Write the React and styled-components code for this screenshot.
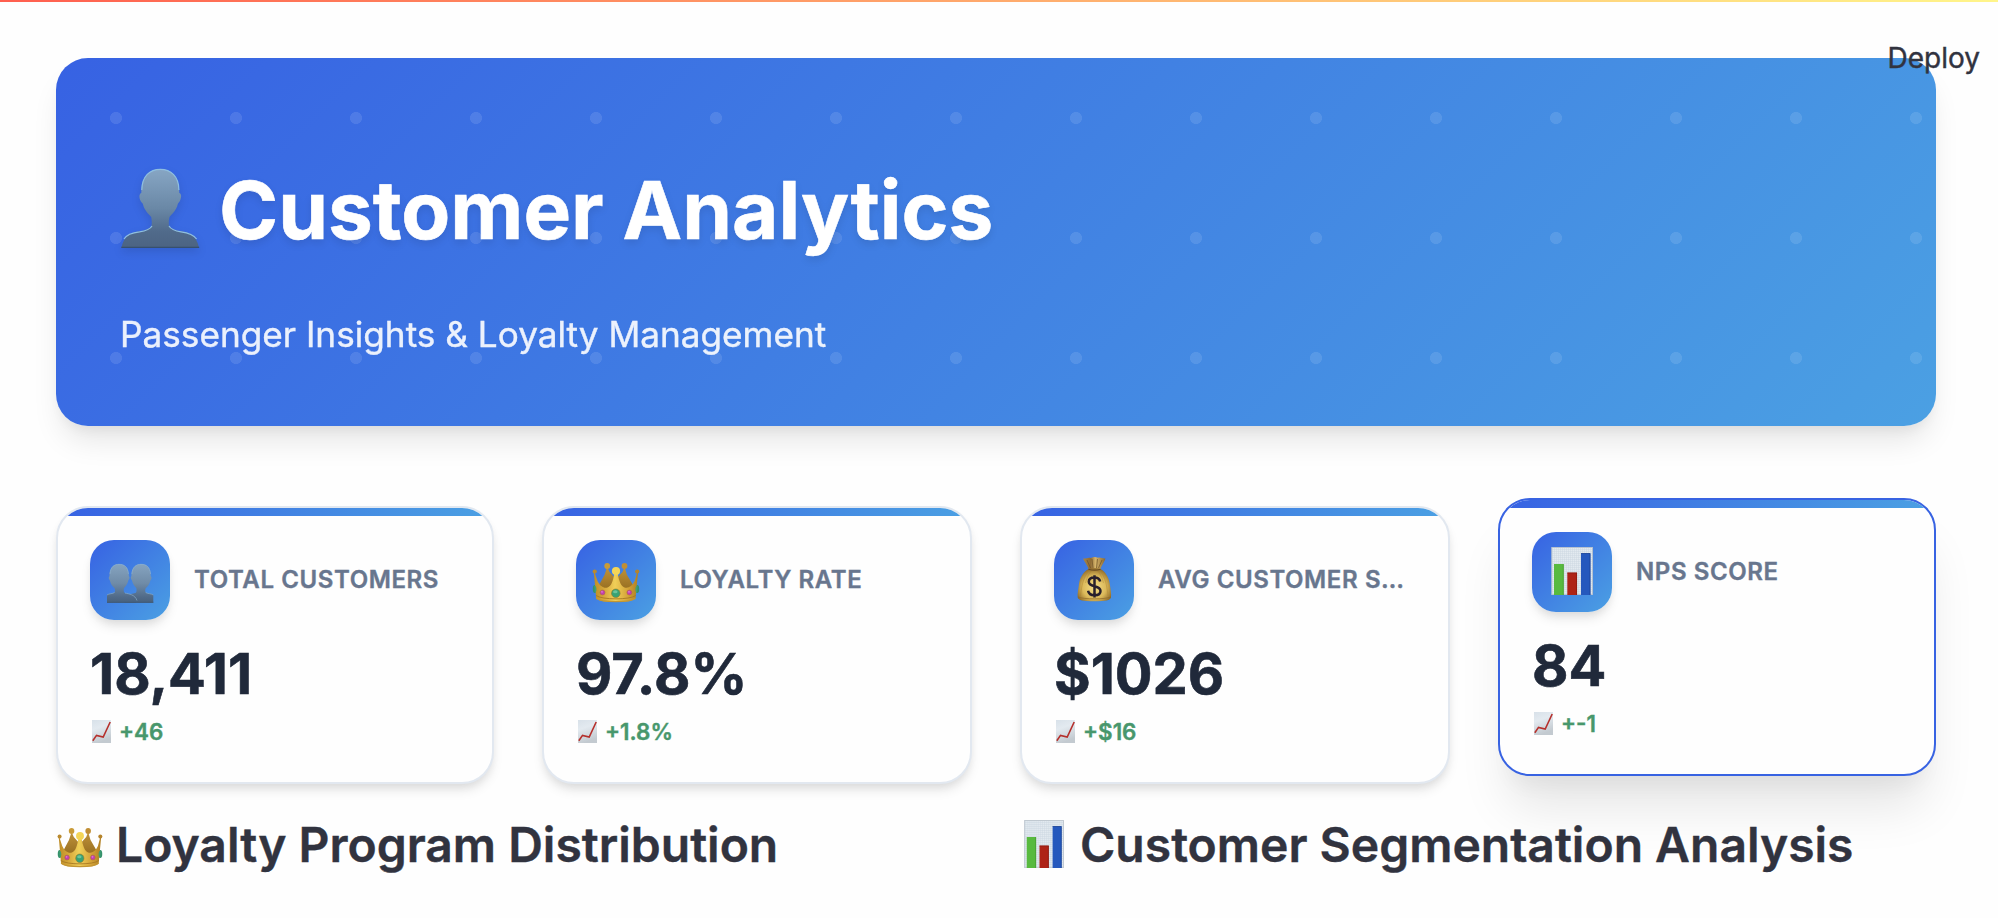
import React, { useId } from "react";
import styled, { createGlobalStyle } from "styled-components";

const GlobalStyle = createGlobalStyle`
  * { box-sizing: border-box; }
  html, body { margin: 0; height: 100%; overflow: hidden; background: #fefefe; }
  body {
    font-family: Inter, "Liberation Sans", sans-serif;
    color: #31333f;
    -webkit-text-stroke: 0.4px currentColor;
  }
`;

const brandGradient = "#3762e3 0%, #4ba0e3 100%";

const TopStripe = styled.div`
  position: absolute;
  inset: 0 0 auto 0;
  height: 2px;
  background: linear-gradient(90deg, #ff5f4f, #fff58a);
`;

const DeployButton = styled.button`
  position: absolute;
  top: 41px;
  right: 18px;
  padding: 0;
  border: 0;
  background: none;
  font: 400 28px/34px Inter, "Liberation Sans", sans-serif;
  color: #31333f;
`;

const Page = styled.main`
  width: 1998px;
  height: 918px;
  padding: 58px 62px 0 56px;
`;

const Hero = styled.header`
  height: 368px;
  padding: 104px 64px 63px;
  border-radius: 32px;
  background:
    radial-gradient(circle, rgba(255, 255, 255, 0.1) 5.7px, transparent 6.3px) 0 0 / 120px 120px,
    linear-gradient(135deg, ${brandGradient});
  box-shadow: 0 20px 30px -6px rgba(0, 0, 0, 0.1), 0 8px 12px -4px rgba(0, 0, 0, 0.05);
`;

const HeroTitle = styled.h1`
  display: flex;
  gap: 19px;
  margin: 0 0 48px;
  font-size: 80px;
  font-weight: 700;
  line-height: 96px;
  color: #fff;
  -webkit-text-stroke-width: 0.6px;
  text-shadow: 0 4px 8px rgba(0, 0, 0, 0.1);
  svg {
    margin-top: 6px;
    filter: drop-shadow(0 4px 4px rgba(0, 0, 0, 0.1));
  }
`;

const HeroSubtitle = styled.p`
  margin: 0;
  font-size: 35.2px;
  line-height: 57px;
  color: #fff;
  opacity: 0.9;
`;

const Metrics = styled.section`
  display: grid;
  grid-template-columns: 438px 430px 430px 438px;
  gap: 48px;
  margin-top: 80px;
`;

const Card = styled.article`
  height: 278px;
  border: 2px solid ${(p) => (p.$raised ? "#3863e2" : "#e2e8f0")};
  border-radius: 32px;
  overflow: hidden;
  background: #fefefe;
  transform: ${(p) => (p.$raised ? "translateY(-8px)" : "none")};
  box-shadow: ${(p) =>
    p.$raised
      ? "0 40px 50px -10px rgba(0,0,0,.1), 0 20px 20px -10px rgba(0,0,0,.04)"
      : "0 8px 12px -2px rgba(0,0,0,.1), 0 4px 8px -2px rgba(0,0,0,.06)"};
`;

const CardAccent = styled.div`
  height: 8px;
  background: linear-gradient(90deg, ${brandGradient});
`;

const CardBody = styled.div`
  padding: 24px 32px 32px;
`;

const CardHead = styled.div`
  display: flex;
  align-items: center;
  gap: 24px;
  margin-bottom: 21px;
`;

const IconTile = styled.div`
  display: flex;
  flex: none;
  justify-content: center;
  width: 80px;
  height: 80px;
  padding-top: 15px;
  border-radius: 24px;
  background: linear-gradient(135deg, ${brandGradient});
  box-shadow: 0 8px 12px -2px rgba(0, 0, 0, 0.1), 0 4px 8px -2px rgba(0, 0, 0, 0.06);
`;

const CardLabel = styled.div`
  font-size: 24px;
  font-weight: 600;
  line-height: 38px;
  letter-spacing: 0.6px;
  white-space: nowrap;
  color: #68768e;
`;

const CardValue = styled.div`
  font-size: 56px;
  font-weight: 700;
  line-height: 67px;
  color: #20293a;
  -webkit-text-stroke-width: 0.6px;
`;

const CardChange = styled.div`
  display: flex;
  gap: 6px;
  margin-top: 6px;
  font-size: 22.4px;
  font-weight: 600;
  line-height: 36px;
  color: #48976c;
  svg { margin-top: 6px; }
`;

const Sections = styled.section`
  display: grid;
  grid-template-columns: 1fr 1fr;
  gap: 48px;
  margin-top: 32px;
`;

const SectionTitle = styled.h3`
  position: relative;
  display: flex;
  gap: 12px;
  margin: 0;
  font-size: 48px;
  font-weight: 600;
  line-height: 58px;
  white-space: nowrap;
  svg { margin: 4px 1px 0; }
`;

function Bust({ size }) {
  const id = useId();
  return (
    <svg width={size} height={size} viewBox="0 0 80 80">
      <defs>
        <linearGradient id={id} x1="0" y1="0" x2="0" y2="1">
          <stop offset="0" stopColor="#87a6c4" />
          <stop offset="0.5" stopColor="#6a88a6" />
          <stop offset="0.8" stopColor="#506a8a" />
          <stop offset="1" stopColor="#4c6483" />
        </linearGradient>
      </defs>
      <path
        d="M40.300 1C52 1 59.500 9 59.300 25C61.500 25.500 61.600 29 60.300 32C59.500 34.500 58 35 57.800 36C56.500 42 52 46 49.500 49C48.600 52 48.700 55 49 58C51 61 56 62.500 61 63.300C70 64.500 76.500 68 79 79.500H1.500C4 68 10.500 64.500 19.500 63.300C25 62.500 29.800 61 31.500 58C32 55 31.800 52 31.200 49C28.600 46 24.200 42 22.900 36C22.500 35 21 34.500 20.200 32C19 29 19.200 25.500 21.300 25C21 9 28.600 1 40.300 1Z"
        fill={`url(#${id})`}
      />
      <path d="M21.800 22C22 8 30 1.300 40.300 1.300S58.800 8 58.900 22M4 71C7 66 13 64.500 19.500 63.800C25 63 30 61.500 32 58M49 58C51 61.500 57 63.200 61 63.800C68 64.800 73.500 66.500 76.600 71" fill="none" stroke="#8fbfe0" strokeWidth="1.200" />
      <path d="M1.300 79.300H79.200" stroke="#37506e" strokeWidth="1.300" />
    </svg>
  );
}

function People({ size }) {
  const id = useId();
  const head =
    "M13.100 9C19 9 23 13 22.900 21.200C24 21.700 23.600 24 22.400 25.300C21.700 29 19.500 31.500 17.900 33.200C17.500 36 17.800 37.300 19 38C21.500 39 25 38.700 28 41.500L30 47.700H1V40C3 38.300 7.500 38.800 8.900 37C9.300 36 9 34.500 8.600 33.200C6.500 31.500 4.500 29 3.800 25.300C2.600 24 2.400 21.700 3.500 21.200C3.400 13 7.300 9 13.100 9Z";
  return (
    <svg width={size} height={size} viewBox="0 0 48 48">
      <defs>
        <linearGradient id={id} gradientUnits="userSpaceOnUse" x1="0" y1="9" x2="0" y2="48">
          <stop offset="0" stopColor="#86a4c0" />
          <stop offset="0.5" stopColor="#6f8ba7" />
          <stop offset="0.85" stopColor="#506a88" />
          <stop offset="1" stopColor="#47607c" />
        </linearGradient>
      </defs>
      <path d={head} transform="matrix(-1 0 0 1 48.300 0)" fill={`url(#${id})`} />
      <path d={head} fill={`url(#${id})`} />
      <path d="M19 38C23 39 29 39.500 31 45.500M4 19C4.500 12 8 9.300 13.100 9.300S22 12 22.400 19M25.900 19C26.400 12 30 9.300 35.200 9.300S44 12 44.500 19M1 40C3 38.500 7 38.800 8.600 37.500M47.300 40C45 38.500 41.500 38.800 39.700 37.500" fill="none" stroke="#8fb4d2" strokeWidth="0.600" />
      <path d="M1 47.300H47.300" stroke="#3f5875" strokeWidth="0.900" />
    </svg>
  );
}

function Crown({ size, width = size }) {
  const id = useId();
  return (
    <svg width={width} height={size} viewBox="0 0 48 48" preserveAspectRatio="none">
      <defs>
        <linearGradient id={`${id}f`} x1="0" x2="1">
          <stop offset="0" stopColor="#bd8c27" />
          <stop offset="0.25" stopColor="#d8aa3c" />
          <stop offset="0.48" stopColor="#f0cf58" />
          <stop offset="0.75" stopColor="#d6a63a" />
          <stop offset="1" stopColor="#b07f22" />
        </linearGradient>
        <linearGradient id={`${id}b`} x1="0" y1="0" x2="0" y2="1">
          <stop offset="0" stopColor="#c0933a" />
          <stop offset="1" stopColor="#8f671c" />
        </linearGradient>
      </defs>
      <path d="M15.200 12L17.500 17L24 24L30.500 17L32.500 12L35 20L41 30L38 39H10L7 30L12.500 20Z" fill={`url(#${id}b)`} />
      <circle cx="15.200" cy="11" r="2.900" fill="#c99b38" />
      <circle cx="32.500" cy="11" r="2.900" fill="#c08e34" />
      <ellipse cx="2.800" cy="34" rx="2" ry="4" fill="#35916a" />
      <ellipse cx="45.200" cy="34" rx="2" ry="4" fill="#35916a" />
      <path d="M2.400 17L5.500 26C8 31.500 12 33.500 15.500 32.500C19.500 31 21 26 22.300 18.500H25.700C27 26 28.800 31 32.500 32.500C36.500 33.500 40 31.500 42.700 26L45.200 17L46 18L44.800 30L43.500 43.500C39 48.200 8.500 48.200 4.200 43.500L3 30L1.900 18Z" fill={`url(#${id}f)`} />
      <circle cx="2.700" cy="16.600" r="2.100" fill="#ba8a2f" />
      <circle cx="45.200" cy="16.600" r="2.100" fill="#b5832b" />
      <circle cx="24" cy="16" r="4.100" fill="#f4d557" />
      <path d="M2.300 30.500C5 30.500 5.200 37.500 2.800 37.800ZM45.600 30.500C42.900 30.500 42.700 37.500 45.100 37.800Z" fill="#3f9f76" />
      <path d="M4 40.500C10 45 38 45 43.700 40.500" fill="none" stroke="#a67822" strokeWidth="0.900" />
      <path d="M4.200 43.300C10 47.800 38 47.800 43.400 43.300" fill="none" stroke="#c39633" strokeWidth="1.200" />
      <circle cx="10.500" cy="37.500" r="2.500" fill="#c23fae" stroke="#a9742a" strokeWidth="0.500" />
      <circle cx="37.400" cy="37.500" r="2.500" fill="#c23fae" stroke="#a9742a" strokeWidth="0.500" />
      <circle cx="23.800" cy="38.300" r="4.300" fill="#38a274" stroke="#94752a" strokeWidth="0.600" />
      <ellipse cx="23.300" cy="36.800" rx="2.300" ry="1.500" fill="#6bc39b" />
      <circle cx="10" cy="36.800" r="0.900" fill="#e07cd0" />
      <circle cx="37" cy="36.800" r="0.900" fill="#e07cd0" />
    </svg>
  );
}

function MoneyBag({ size }) {
  const id = useId();
  return (
    <svg width={size} height={size} viewBox="0 0 48 48">
      <defs>
        <radialGradient id={id} cx="0.5" cy="0.58" r="0.58">
          <stop offset="0" stopColor="#f3dc85" />
          <stop offset="0.6" stopColor="#dbb95a" />
          <stop offset="1" stopColor="#8f6a28" />
        </radialGradient>
        <linearGradient id={`${id}t`} x1="0" x2="1">
          <stop offset="0" stopColor="#a78548" />
          <stop offset="0.35" stopColor="#8f6b34" />
          <stop offset="0.55" stopColor="#d4b36a" />
          <stop offset="1" stopColor="#8b672e" />
        </linearGradient>
      </defs>
      <path d="M13 3.500C16 4 18 1.800 21 3C23 1.500 26 1.700 28 2.700C31 2 33 4 35.500 3.500C34.500 7 31.500 10 30.300 14.500H18.700C17.500 10 14.500 7 13 3.500Z" fill={`url(#${id}t)`} />
      <path d="M17 5L20.500 13M22 4L23 13M27.500 4L26.500 13M32 5L28.500 13" stroke="#6f5127" strokeWidth="0.700" />
      <path d="M18.500 14C21 13 28 13 30.500 14C36 17 39 23 39.800 29C40.500 34 41.500 39 41 42.500C40 45.500 36 46.200 24.300 46.200S8.700 45.500 7.700 42.500C7.200 39 8.500 34 9 29C9.800 23 13 17 18.500 14Z" fill={`url(#${id})`} />
      <path d="M18 17C13 23 11.500 32 10.500 41M31 17C35.500 23 37 32 38 41M21 16C18 20 16.500 24 15.500 28M28 16C31 20 32.500 24 33.500 28" fill="none" stroke="#a9822f" strokeWidth="0.600" opacity="0.650" />
      <path d="M18.500 14.200C22 15.300 27 15.300 30.500 14.200" fill="none" stroke="#684b22" strokeWidth="1.200" />
      <path d="M8 42C14 44.500 35 44.500 40.800 42" fill="none" stroke="#8c6728" strokeWidth="0.700" />
      <path d="M30.200 26.500C29.500 23.700 27.400 22.500 24.400 22.500C21 22.500 18.800 24.100 18.800 26.800C18.800 29.500 20.800 30.300 24.500 31.200C28.400 32.100 30.500 33.200 30.500 36C30.500 38.700 28 40.300 24.600 40.300C21 40.300 18.600 38.700 18.100 35.800M24.500 20.300V42.500" fill="none" stroke="#28202c" strokeWidth="2.500" />
    </svg>
  );
}

function BarChart({ size, width = size }) {
  const id = useId();
  return (
    <svg width={width} height={size} viewBox="0 0 48 48" preserveAspectRatio="none">
      <defs>
        <pattern id={id} width="2" height="2" patternUnits="userSpaceOnUse">
          <rect width="2" height="2" fill="#e3eaf0" />
          <path d="M0 0H2M0 0V2" stroke="#c9d6e0" strokeWidth="0.800" />
        </pattern>
      </defs>
      <rect x="3.800" y="0.500" width="40.600" height="47.200" fill={`url(#${id})`} stroke="#bcc5ce" strokeWidth="0.900" />
      <path d="M6 17H15.700V48H6Z" fill="#58ba3f" />
      <path d="M19.300 25.600H29V48H19.300Z" fill="#ae2317" />
      <path d="M33 6.200H42.400V48H33Z" fill="#2558bd" />
      <path d="M15.300 17.200V48" stroke="#46962f" strokeWidth="0.700" />
      <path d="M28.600 26V48M19.300 26H29" stroke="#861a11" strokeWidth="0.700" />
      <path d="M42 6.500V48M33 6.500H42" stroke="#1b4190" strokeWidth="0.700" />
    </svg>
  );
}

function TrendUp() {
  const id = useId();
  return (
    <svg width="23" height="23" viewBox="0 0 23 23">
      <defs>
        <linearGradient id={id} x1="0" y1="0" x2="0.3" y2="1">
          <stop offset="0" stopColor="#d8e1e9" />
          <stop offset="0.4" stopColor="#e3eaf0" />
          <stop offset="1" stopColor="#c3cad0" />
        </linearGradient>
      </defs>
      <rect x="2" y="0" width="19" height="23" fill={`url(#${id})`} />
      <path d="M2.800 20.800L6.500 15.400L13.200 17L20.200 2" fill="none" stroke="#b5302c" strokeWidth="1.600" />
    </svg>
  );
}

const metrics = [
  { label: "TOTAL CUSTOMERS", value: "18,411", change: "+46", Icon: People },
  { label: "LOYALTY RATE", value: "97.8%", change: "+1.8%", Icon: Crown },
  { label: "AVG CUSTOMER S…", value: "$1026", change: "+$16", Icon: MoneyBag },
  { label: "NPS SCORE", value: "84", change: "+-1", Icon: BarChart, raised: true },
];

export default function App() {
  return (
    <>
      <GlobalStyle />
      <Page>
        <Hero>
          <HeroTitle>
            <Bust size={80} />
            Customer Analytics
          </HeroTitle>
          <HeroSubtitle>Passenger Insights &amp; Loyalty Management</HeroSubtitle>
        </Hero>
        <Metrics>
          {metrics.map(({ label, value, change, Icon, raised }) => (
            <Card key={label} $raised={raised}>
              <CardAccent />
              <CardBody>
                <CardHead>
                  <IconTile>
                    <Icon size={48} />
                  </IconTile>
                  <CardLabel>{label}</CardLabel>
                </CardHead>
                <CardValue>{value}</CardValue>
                <CardChange>
                  <TrendUp />
                  {change}
                </CardChange>
              </CardBody>
            </Card>
          ))}
        </Metrics>
        <Sections>
          <SectionTitle>
            <Crown size={48} width={46} />
            Loyalty Program Distribution
          </SectionTitle>
          <SectionTitle>
            <BarChart size={48} width={46} />
            Customer Segmentation Analysis
          </SectionTitle>
        </Sections>
      </Page>
      <TopStripe />
      <DeployButton>Deploy</DeployButton>
    </>
  );
}
